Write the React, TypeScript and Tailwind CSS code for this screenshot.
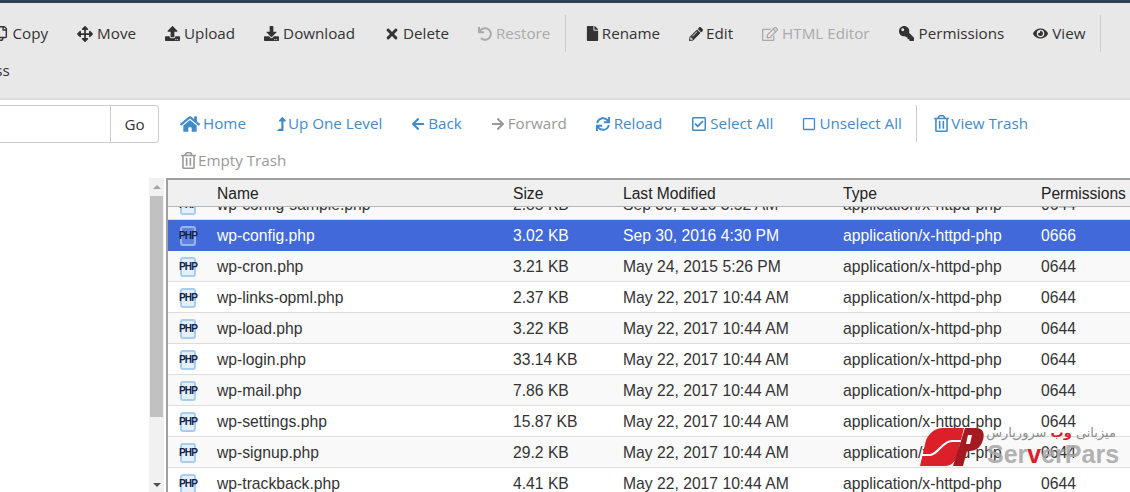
import type { ReactNode } from "react";
import {
  FaArrowLeft, FaArrowRight, FaArrowsAlt, FaDownload, FaEye, FaFile, FaFileArchive, FaHome, FaKey, FaLevelUpAlt,
  FaPencilAlt, FaRegCheckSquare, FaRegCopy, FaRegEdit, FaRegSquare, FaRegTrashAlt, FaSync, FaTimes, FaUndo, FaUpload,
} from "react-icons/fa";

const files = [
  { name: "wp-config-sample.php", size: "2.85 KB", date: "Sep 30, 2016 3:52 AM", perm: "0644" },
  { name: "wp-config.php", size: "3.02 KB", date: "Sep 30, 2016 4:30 PM", perm: "0666", selected: true },
  { name: "wp-cron.php", size: "3.21 KB", date: "May 24, 2015 5:26 PM", perm: "0644" },
  { name: "wp-links-opml.php", size: "2.37 KB", date: "May 22, 2017 10:44 AM", perm: "0644" },
  { name: "wp-load.php", size: "3.22 KB", date: "May 22, 2017 10:44 AM", perm: "0644" },
  { name: "wp-login.php", size: "33.14 KB", date: "May 22, 2017 10:44 AM", perm: "0644" },
  { name: "wp-mail.php", size: "7.86 KB", date: "May 22, 2017 10:44 AM", perm: "0644" },
  { name: "wp-settings.php", size: "15.87 KB", date: "May 22, 2017 10:44 AM", perm: "0644" },
  { name: "wp-signup.php", size: "29.2 KB", date: "May 22, 2017 10:44 AM", perm: "0644" },
  { name: "wp-trackback.php", size: "4.41 KB", date: "May 22, 2017 10:44 AM", perm: "0644" },
];

// box = width of the icon slot, the text starts right after it
function ToolItem({ icon, label, box, muted }: { icon: ReactNode; label: string; box: string; muted?: boolean }) {
  return (
    <span className={`flex h-[37px] shrink-0 items-center px-[14.5px] whitespace-nowrap ${muted ? "text-[#aaaaaa]" : "text-[#333333]"}`}>
      <span className={`flex shrink-0 justify-start ${box}`}>{icon}</span>
      {label}
    </span>
  );
}

function NavItem({ icon, label, box, muted }: { icon: ReactNode; label: string; box: string; muted?: boolean }) {
  return (
    <span className={`flex h-[37px] shrink-0 items-center px-[14.5px] whitespace-nowrap ${muted ? "text-[#999999]" : "text-[#428bca]"}`}>
      <span className={`flex shrink-0 justify-start ${box}`}>{icon}</span>
      {label}
    </span>
  );
}

function PhpIcon({ selected }: { selected?: boolean }) {
  return (
    <span className="relative flex h-[20px] w-[18px] items-center justify-center">
      <span className={`absolute inset-x-[1px] inset-y-0 rounded-[3px] border-2 ${selected ? "border-[#9db4e6] bg-[#5f83dc]" : "border-[#a9cdf0] bg-[#e3effa]"}`} />
      <span className="relative text-[10px] leading-none font-bold tracking-[-0.9px] text-[#12204a]">PHP</span>
    </span>
  );
}

function Logo() {
  return (
    <div className="absolute top-[427px] left-[920px] h-[42px] w-[200px]">
      <svg width="66" height="40" viewBox="0 0 66 40" className="absolute top-0 left-0">
        <path d="M44 1 H23 C14 1 9 7 6 13 L0 39 H25 C31 39 35 35 37 29 L41 13 Z" fill="#dc2029" />
        <path d="M1 28 H10 C18 28 22 14 32 14 H44" fill="none" stroke="#ffffff" strokeWidth="2.2" />
        <path d="M45 1 H56 C63 1 65 6 63 13 C61 20 56 24 50 24 H47 L43 39 H33 Z" fill="#a31a20" />
        <path d="M48 8 H52 L50 17 H46 Z" fill="#ffffff" />
      </svg>
      <span dir="rtl" className="absolute top-[-3px] left-[68px] w-[128px] text-[13px] leading-[18px] tracking-[0.5px] whitespace-nowrap text-[#8c8c8c] [font-family:'DejaVu_Sans',sans-serif]">
        میزبانی <span className="font-bold text-[#dc2029]">وب</span> سرورپارس
      </span>
      <span className="absolute top-[13px] left-[67px] text-[25px] leading-[28px] font-bold whitespace-nowrap text-[#a8a8a8]/90 [font-family:'Liberation_Sans',sans-serif]">
        Ser<span className="text-[#dc2029]">v</span>erPars
      </span>
    </div>
  );
}

export default function App() {
  return (
    <div className="relative h-[492px] w-[1130px] overflow-hidden bg-white text-[15.2px] [font-family:'Open_Sans',sans-serif]">
      <div className="h-[3px] bg-[#2d4056]" />

      {/* actions */}
      <div className="h-[97px] border-b-2 border-[#dddddd] bg-[#e8e8e8] pt-[12px]">
        <div className="ml-[-22px] flex w-[1152px] flex-wrap items-center">
          <ToolItem icon={<FaRegCopy className="text-[15px]" />} box="w-[20px]" label="Copy" />
          <ToolItem icon={<FaArrowsAlt className="text-[16px]" />} box="w-[20px]" label="Move" />
          <ToolItem icon={<FaUpload className="text-[15px]" />} box="w-[19px]" label="Upload" />
          <ToolItem icon={<FaDownload className="text-[15px]" />} box="w-[19px]" label="Download" />
          <ToolItem icon={<FaTimes className="text-[16px]" />} box="w-[19px]" label="Delete" />
          <ToolItem icon={<FaUndo className="text-[14px]" />} box="w-[18px]" label="Restore" muted />
          <span className="mr-[4.5px] h-[37px] w-px bg-[#cccccc]" />
          <ToolItem icon={<FaFile className="text-[15px]" />} box="w-[17px]" label="Rename" />
          <ToolItem icon={<FaPencilAlt className="text-[14px]" />} box="w-[17px]" label="Edit" />
          <ToolItem icon={<FaRegEdit className="text-[16px]" />} box="w-[20px]" label="HTML Editor" muted />
          <ToolItem icon={<FaKey className="-scale-x-100 text-[15px]" />} box="w-[20px]" label="Permissions" />
          <ToolItem icon={<FaEye className="text-[15px]" />} box="w-[19px]" label="View" />
          <span className="h-[37px] w-px bg-[#cccccc]" />
          <span className="ml-[-73px]">
            <ToolItem icon={<FaFileArchive className="text-[15px]" />} box="w-[19px]" label="Compress" />
          </span>
        </div>
      </div>

      {/* path + navigation */}
      <div className="flex">
        <div className="mt-[5px] ml-[-40px] flex h-[38px] w-[199px] shrink-0">
          <div className="flex-1 rounded-l border border-[#cccccc]" />
          <div className="flex w-[48px] items-center justify-center rounded-r border border-l-0 border-[#cccccc] text-[15.2px] text-[#333333]">Go</div>
        </div>
        <div className="ml-[6.5px] flex flex-1 flex-wrap content-start pt-[5px]">
          <NavItem icon={<FaHome className="text-[20px]" />} box="w-[23px]" label="Home" />
          <NavItem icon={<FaLevelUpAlt className="text-[14px]" />} box="w-[13px]" label="Up One Level" />
          <NavItem icon={<FaArrowLeft className="text-[14px]" />} box="w-[17px]" label="Back" />
          <NavItem icon={<FaArrowRight className="text-[14px]" />} box="w-[17px]" label="Forward" muted />
          <NavItem icon={<FaSync className="text-[14px]" />} box="w-[18px]" label="Reload" />
          <NavItem icon={<FaRegCheckSquare className="text-[16px]" />} box="w-[19px]" label="Select All" />
          <NavItem icon={<FaRegSquare className="text-[14px]" />} box="w-[17px]" label="Unselect All" />
          <span className="mr-[1.5px] h-[37px] w-px bg-[#cccccc]" />
          <NavItem icon={<FaRegTrashAlt className="text-[17px]" />} box="w-[18px]" label="View Trash" />
          <NavItem icon={<FaRegTrashAlt className="text-[17px]" />} box="w-[18px]" label="Empty Trash" muted />
        </div>
      </div>

      {/* file table */}
      <div className="absolute top-[178px] right-0 left-[149px] flex h-[314px] [font-family:'Liberation_Sans',sans-serif]">
        <div className="flex w-[15px] shrink-0 flex-col items-center bg-[#f1f1f1]">
          <span className="mt-[7px] h-0 w-0 border-x-[4px] border-b-[4px] border-x-transparent border-b-[#a3a3a3]" />
          <span className="mt-[7px] h-[221px] w-[13px] bg-[#c1c1c1]" />
          <span className="mt-auto mb-[5px] h-0 w-0 border-x-[4px] border-t-[4px] border-x-transparent border-t-[#505050]" />
        </div>
        <div className="ml-[2px] flex min-w-0 flex-1 flex-col border-t-2 border-l-2 border-[#a0a0a0]">
          <div className="relative z-10 flex h-[27px] shrink-0 items-center border-b border-[#b5b5b5] bg-[#f0f0f0] pt-px pl-[49px] text-[15.6px] text-[#222222]">
            <span className="w-[296px]">Name</span>
            <span className="w-[110px]">Size</span>
            <span className="w-[220px]">Last Modified</span>
            <span className="w-[198px]">Type</span>
            <span className="whitespace-nowrap">Permissions</span>
          </div>
          <div className="min-h-0 flex-1 overflow-hidden">
            <div className="mt-[-18px]">
              {files.map((f, i) => (
                <div
                  key={f.name}
                  className={`flex h-[31px] items-center border-b pt-px text-[15.7px] whitespace-nowrap ${f.selected ? "border-[#4169d9] bg-[#4169d9] text-white" : i % 2 === 0 ? "border-[#dddddd] bg-[#f9f9f9] text-[#333333]" : "border-[#dddddd] bg-white text-[#333333]"}`}
                >
                  <span className="flex w-[49px] justify-start pl-[11px]"><PhpIcon selected={f.selected} /></span>
                  <span className="w-[296px]">{f.name}</span>
                  <span className="w-[110px]">{f.size}</span>
                  <span className="w-[220px]">{f.date}</span>
                  <span className="w-[198px]">application/x-httpd-php</span>
                  <span>{f.perm}</span>
                </div>
              ))}
            </div>
          </div>
        </div>
      </div>

      <Logo />
    </div>
  );
}
